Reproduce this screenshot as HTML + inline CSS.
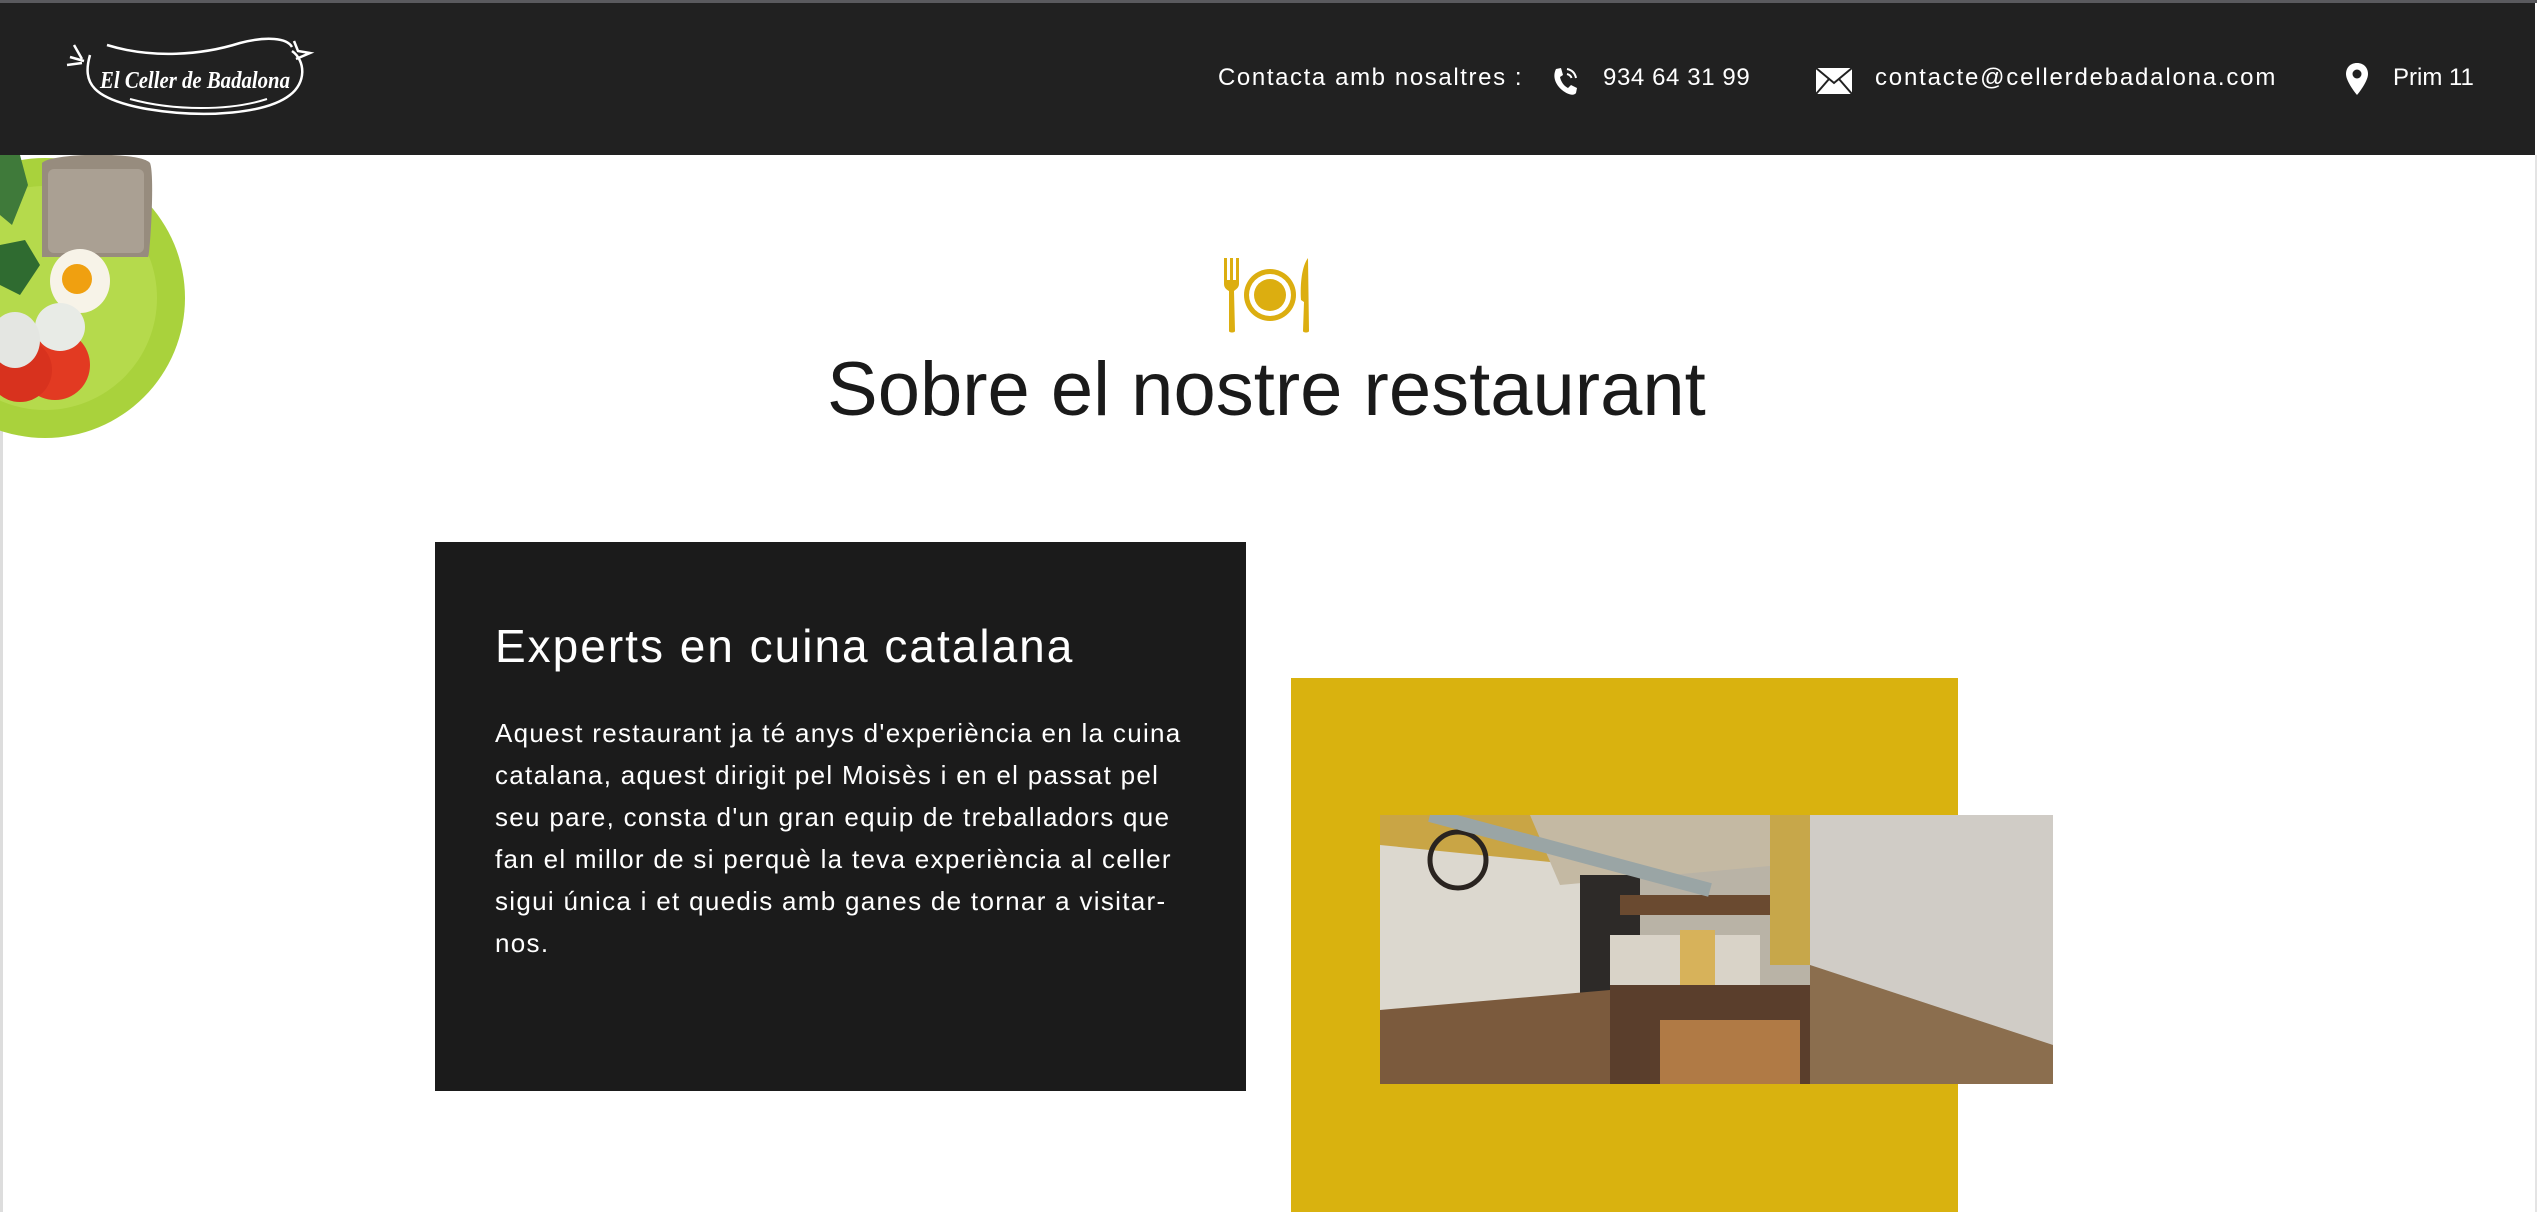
<!DOCTYPE html>
<html><head><meta charset="utf-8"><style>
*{margin:0;padding:0;box-sizing:border-box}
body{width:2537px;height:1212px;overflow:hidden;background:#fff;font-family:"Liberation Sans",sans-serif;position:relative}
.topline{position:absolute;left:0;top:0;width:2537px;height:3px;background:#5a5a5e}
header{position:absolute;left:0;top:3px;width:2535px;height:152px;background:#212121}
.ct{position:absolute;top:60px;color:#fff;font-size:24px;line-height:30px;white-space:nowrap;letter-spacing:1.6px}
.redge{position:absolute;right:0;top:155px;width:2px;height:1057px;background:#e4e4e4}
.ledge{position:absolute;left:0;top:155px;width:3px;height:1057px;background:#ddd}
h1{position:absolute;left:827px;top:348px;font-size:76px;font-weight:400;color:#1a1a1a;white-space:nowrap;line-height:84px}
.dark{position:absolute;left:435px;top:542px;width:811px;height:549px;background:#1b1b1b}
.dark h2{position:absolute;left:60px;top:76px;font-size:46px;font-weight:400;color:#fff;white-space:nowrap;line-height:56px;letter-spacing:2px}
.dark p{position:absolute;left:60px;top:170px;font-size:26px;line-height:42px;color:#fff;white-space:nowrap;letter-spacing:1.3px}
.yel{position:absolute;left:1291px;top:678px;width:667px;height:534px;background:#d9b20f}
.photo{position:absolute;left:1380px;top:815px;width:673px;height:269px;overflow:hidden}
</style></head><body>
<div class="topline"></div>
<header>
<svg style="position:absolute;left:62px;top:30px" width="270" height="90" viewBox="0 0 270 90">
<path d="M28 22 C20 50 30 66 85 76 C145 86 205 80 228 62 C244 50 244 28 230 18" fill="none" stroke="#fff" stroke-width="2.5"/>
<path d="M45 12 C90 26 140 22 178 10 C205 3 225 5 230 14" fill="none" stroke="#fff" stroke-width="2.5"/>
<path d="M68 66 C112 78 168 78 205 66" fill="none" stroke="#fff" stroke-width="2"/>
<path d="M5 32 L20 30 M12 12 L20 26 M8 24 L22 28" stroke="#fff" stroke-width="2.5" fill="none"/>
<path d="M232 8 L236 18 L248 20 L234 26" stroke="#fff" stroke-width="2.5" fill="none"/>
<text x="38" y="55" fill="#fff" font-family="Liberation Serif, serif" font-style="italic" font-weight="bold" font-size="24" textLength="190" lengthAdjust="spacingAndGlyphs">El Celler de Badalona</text>
</svg>
<div class="ct" style="left:1218px">Contacta amb nosaltres :</div>
<svg style="position:absolute;left:1550px;top:62px" width="30" height="32" viewBox="0 0 30 32"><path d="M6 4 L11 3 L13 10 L10 12 C11 17 14 21 18 23 L21 20 L27 23 L26 28 C24 31 18 30 12 25 C6 20 2 12 6 4Z" fill="#fff"/><path d="M17 4 C22 5 25 8 26 13 M17 9 C19 9.5 21 11 21.5 13" stroke="#fff" stroke-width="2" fill="none"/></svg>
<div class="ct" style="left:1603px;letter-spacing:0.6px">934 64 31 99</div>
<svg style="position:absolute;left:1815px;top:64px" width="38" height="28" viewBox="0 0 38 28"><rect x="1" y="1" width="36" height="26" fill="#fff"/><path d="M1 1 L19 16 L37 1 M1 27 L14 12 M37 27 L24 12" stroke="#212121" stroke-width="2" fill="none"/></svg>
<div class="ct" style="left:1875px;letter-spacing:1.8px">contacte@cellerdebadalona.com</div>
<svg style="position:absolute;left:2345px;top:59px" width="24" height="34" viewBox="0 0 24 34"><path d="M12 1 C5 1 1 6 1 12 C1 20 12 33 12 33 C12 33 23 20 23 12 C23 6 19 1 12 1Z" fill="#fff"/><circle cx="12" cy="12" r="4.5" fill="#212121"/></svg>
<div class="ct" style="left:2393px;letter-spacing:0">Prim 11</div>
</header>
<div class="ledge"></div><div class="redge"></div>
<svg style="position:absolute;left:0;top:155px" width="190" height="290" viewBox="0 0 190 290">
<circle cx="45" cy="143" r="140" fill="#a9d23c"/>
<circle cx="45" cy="143" r="112" fill="#b5da4c"/>
<path d="M0 0 L20 0 L28 30 L12 70 L0 60Z" fill="#3f7a3a"/>
<path d="M0 90 L25 85 L40 110 L20 140 L0 130Z" fill="#2f6b30"/>
<path d="M42 8 C50 -2 140 -4 150 8 C155 20 150 100 148 102 L42 102 Z" fill="#978c7e"/>
<rect x="48" y="14" width="96" height="84" rx="6" fill="#aaa093"/>
<ellipse cx="80" cy="126" rx="30" ry="32" fill="#f7f3e8"/>
<circle cx="77" cy="124" r="15" fill="#f0a010"/>
<circle cx="55" cy="210" r="35" fill="#e23a22"/>
<circle cx="20" cy="215" r="32" fill="#d8321e"/>
<ellipse cx="60" cy="172" rx="25" ry="24" fill="#e8ebe6"/>
<ellipse cx="15" cy="185" rx="25" ry="28" fill="#e4e6e2"/>
</svg>
<svg style="position:absolute;left:1222px;top:258px" width="94" height="75" viewBox="0 0 94 75">
<g fill="#dcae10">
<rect x="2" y="0" width="3" height="24"/><rect x="8" y="0" width="3" height="24"/><rect x="14" y="0" width="3" height="24"/>
<path d="M2 22 L17 22 L17 26 C17 30 13 32 12 33 L13 73 C13 75 7 75 7 73 L7 33 C5 32 2 30 2 26Z"/>
<circle cx="48" cy="37" r="26"/>
<circle cx="48" cy="37" r="21" fill="#fff"/>
<circle cx="48" cy="37" r="16"/>
<path d="M86 0 C80 8 78 25 79 42 L82 44 L81 73 C81 75 87 75 87 73 Z"/>
</g></svg>
<h1>Sobre el nostre restaurant</h1>
<div class="dark"><h2>Experts en cuina catalana</h2>
<p>Aquest restaurant ja té anys d'experiència en la cuina<br>catalana, aquest dirigit pel Moisès i en el passat pel<br>seu pare, consta d'un gran equip de treballadors que<br>fan el millor de si perquè la teva experiència al celler<br>sigui única i et quedis amb ganes de tornar a visitar-<br>nos.</p></div>
<div class="yel"></div>
<div class="photo"><svg width="673" height="269" viewBox="0 0 673 269">
<rect width="673" height="269" fill="#b9b3a6"/>
<polygon points="0,0 200,0 200,180 0,200" fill="#dcd8cf"/>
<polygon points="0,0 200,0 200,50 0,30" fill="#c9a545"/>
<polygon points="150,0 400,0 400,50 180,70" fill="#c4b9a3"/>
<polygon points="410,0 673,0 673,230 430,150" fill="#d0ccc6"/>
<polygon points="390,0 430,0 430,150 390,150" fill="#c7a74a"/>
<polygon points="200,60 260,60 260,180 200,185" fill="#2d2a28"/>
<rect x="230" y="120" width="150" height="60" fill="#d9d3c8"/>
<rect x="300" y="115" width="35" height="55" fill="#d7b25a"/>
<rect x="240" y="80" width="150" height="20" fill="#6a4a30"/>
<polygon points="0,195 230,175 230,269 0,269" fill="#7b5a3d"/>
<polygon points="230,170 430,170 430,269 230,269" fill="#5a3e2c"/>
<polygon points="430,150 673,230 673,269 430,269" fill="#8b6e4e"/>
<rect x="280" y="205" width="140" height="64" fill="#b07a45"/>
<circle cx="78" cy="45" r="28" fill="none" stroke="#2a2420" stroke-width="5"/>
<path d="M50 0 L330 75" stroke="#9aa5a5" stroke-width="14"/>
</svg></div>
</body></html>
